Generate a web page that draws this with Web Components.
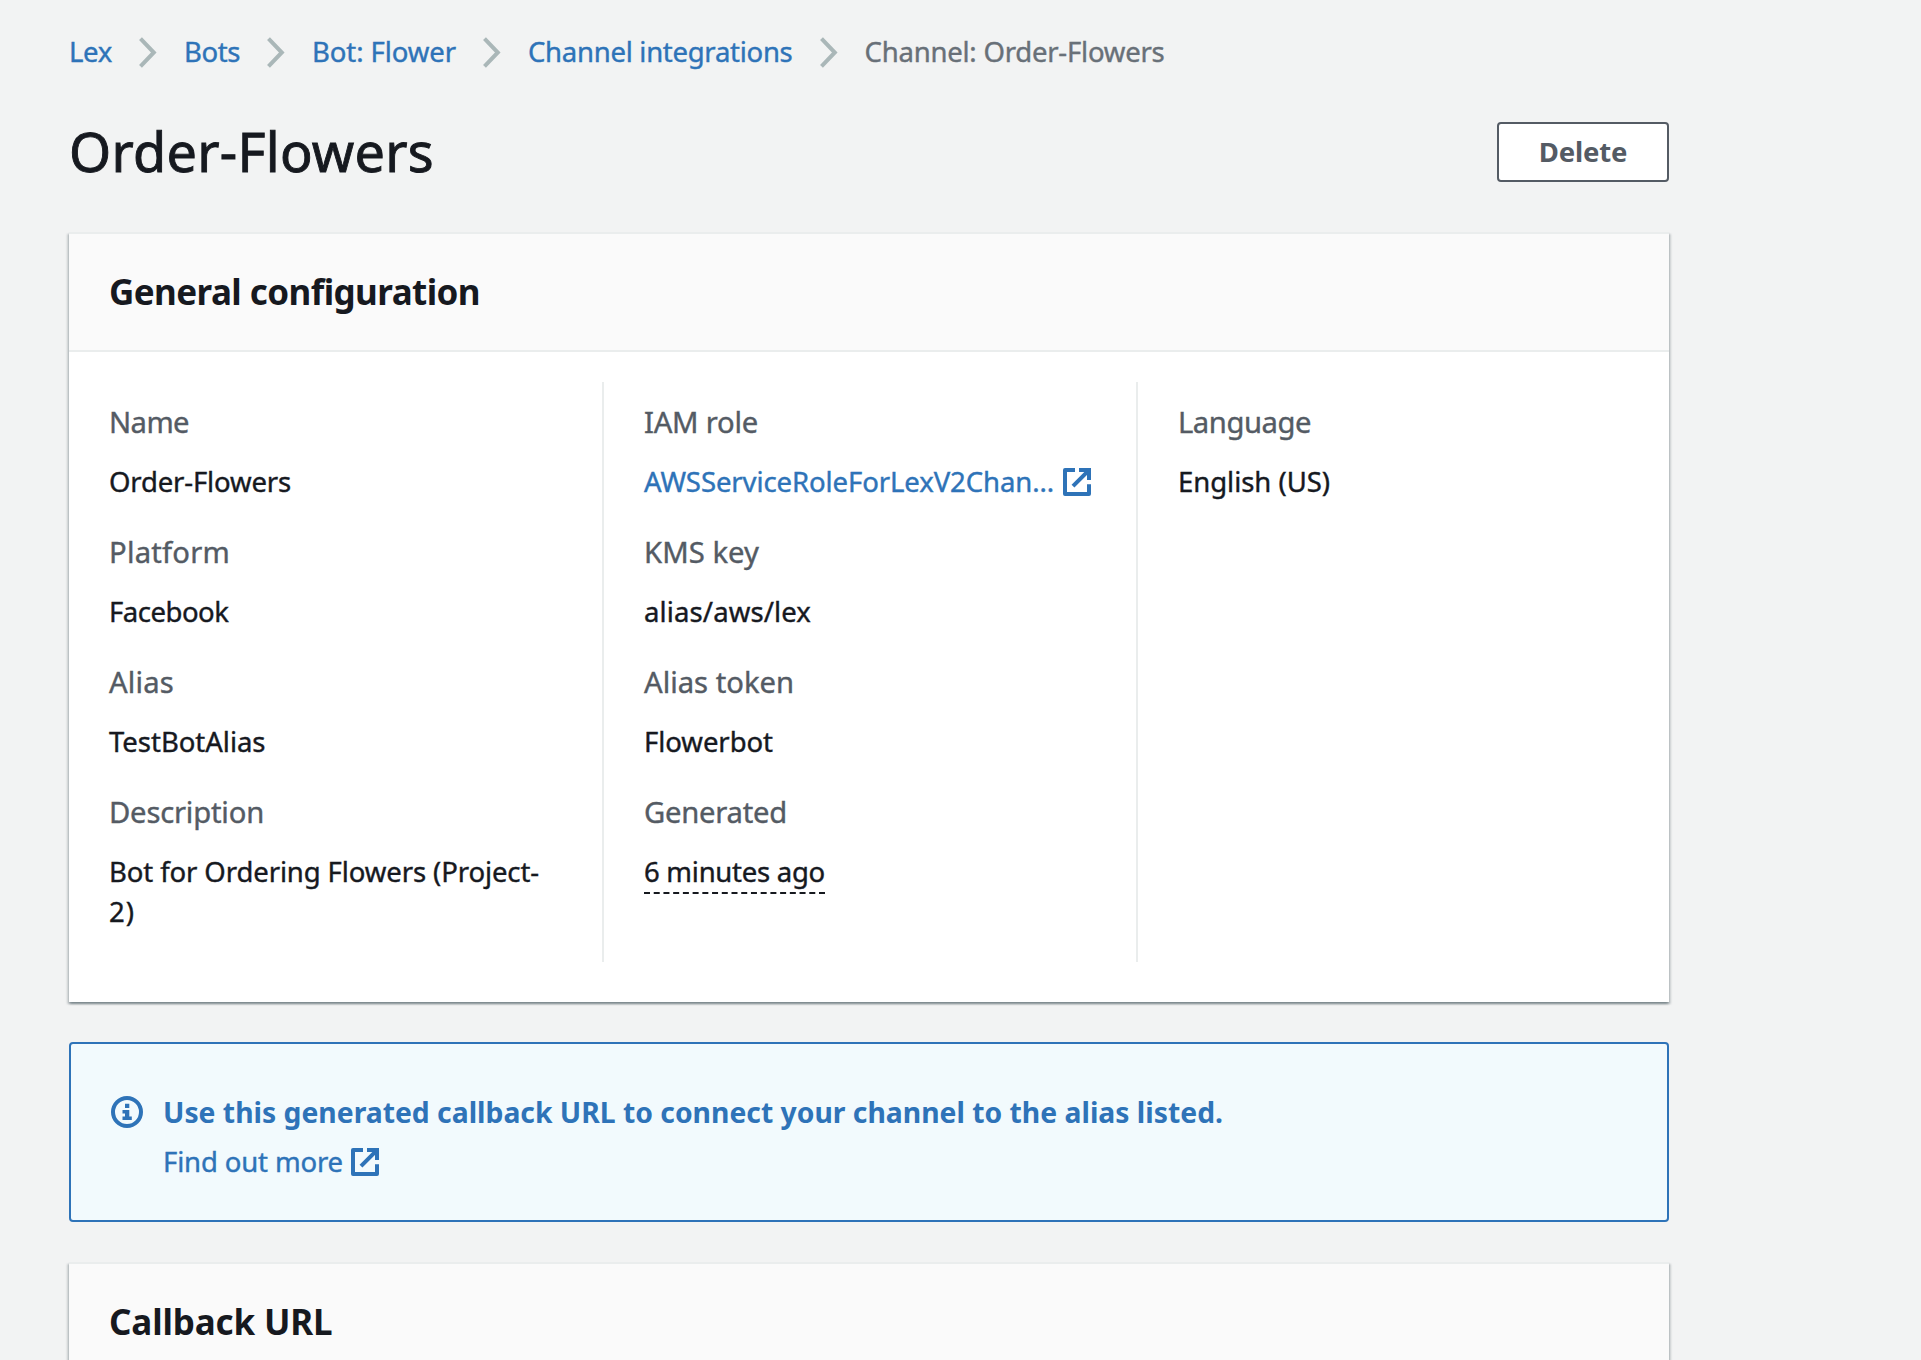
<!DOCTYPE html>
<html lang="en">
<head>
<meta charset="utf-8">
<title>Order-Flowers</title>
<style>
html,body{margin:0;height:1360px;overflow:hidden}
body{background:#f2f3f3;color:#16191f;font:400 27.5px/40px "Noto Sans","Open Sans",sans-serif;-webkit-text-stroke:.4px currentColor}
</style>
</head>
<body>
<lex-page>
  <lex-breadcrumbs slot="nav">
    <lex-crumb><fit-text w="43">Lex</fit-text></lex-crumb>
    <lex-crumb><fit-text w="56">Bots</fit-text></lex-crumb>
    <lex-crumb><fit-text w="144">Bot: Flower</fit-text></lex-crumb>
    <lex-crumb><fit-text w="264.5">Channel integrations</fit-text></lex-crumb>
    <lex-crumb current><fit-text w="300">Channel: Order-Flowers</fit-text></lex-crumb>
  </lex-breadcrumbs>
  <lex-title slot="title">
    <fit-text w="365">Order-Flowers</fit-text>
    <lex-button slot="actions"><fit-text w="88.5">Delete</fit-text></lex-button>
  </lex-title>
  <lex-card>
    <fit-text slot="heading" w="371">General configuration</fit-text>
    <lex-columns>
      <lex-column>
        <lex-field><fit-text slot="label" w="80">Name</fit-text><fit-text w="182">Order-Flowers</fit-text></lex-field>
        <lex-field><fit-text slot="label" w="121">Platform</fit-text><fit-text w="119.5">Facebook</fit-text></lex-field>
        <lex-field><fit-text slot="label" w="65">Alias</fit-text><fit-text w="156.5">TestBotAlias</fit-text></lex-field>
        <lex-field><fit-text slot="label" w="155">Description</fit-text><fit-text w="430">Bot for Ordering Flowers (Project-</fit-text><fit-text w="26">2)</fit-text></lex-field>
      </lex-column>
      <lex-column>
        <lex-field><fit-text slot="label" w="114">IAM role</fit-text><lex-link style="--gap:9px"><fit-text w="410">AWSServiceRoleForLexV2Chan...</fit-text></lex-link></lex-field>
        <lex-field><fit-text slot="label" w="115">KMS key</fit-text><fit-text w="167">alias/aws/lex</fit-text></lex-field>
        <lex-field><fit-text slot="label" w="150">Alias token</fit-text><fit-text w="129">Flowerbot</fit-text></lex-field>
        <lex-field dashed><fit-text slot="label" w="143">Generated</fit-text><fit-text w="181">6 minutes ago</fit-text></lex-field>
      </lex-column>
      <lex-column>
        <lex-field><fit-text slot="label" w="133">Language</fit-text><fit-text w="152">English (US)</fit-text></lex-field>
      </lex-column>
    </lex-columns>
  </lex-card>
  <lex-alert>
    <fit-text slot="heading" w="1060">Use this generated callback URL to connect your channel to the alias listed.</fit-text>
    <lex-link><fit-text w="180">Find out more</fit-text></lex-link>
  </lex-alert>
  <lex-card>
    <fit-text slot="heading" w="223.5">Callback URL</fit-text>
  </lex-card>
</lex-page>
<script>
function define(name, html, setup) {
  customElements.define(name, class extends HTMLElement {
    connectedCallback() {
      if (this.shadowRoot) return;
      const t = document.createElement('template');
      t.innerHTML = html;
      this.attachShadow({mode: 'open'}).append(t.content.cloneNode(true));
      if (setup) setup(this);
    }
  });
}

define('lex-page', `<style>
:host{display:flex;flex-direction:column;width:1600px;padding:32px 0 0 69px}
main{display:flex;flex-direction:column;gap:40px;margin-top:50px}
::slotted([slot=title]){margin-top:50px}
</style><slot name="nav"></slot><slot name="title"></slot><main><slot></slot></main>`);

define('lex-breadcrumbs', `<style>:host{display:flex;align-items:center;height:40px}</style><slot></slot>`);

define('lex-crumb', `<style>
:host{display:flex;align-items:center;color:#2e73b8}
:host([current]){color:#687078}
svg{width:18px;height:31px;margin:0 27px}
:host([current]) svg{display:none}
</style><slot></slot><svg viewBox="0 0 18 31" fill="none" stroke="#aab7b8" stroke-width="4"><path d="M1.5 1.7 14.8 15.5 1.5 29.3"/></svg>`);

define('lex-title', `<style>
:host{display:flex;justify-content:space-between;align-items:flex-start;height:60px}
h1{margin:0;font-size:54px;font-weight:400;line-height:58px;-webkit-text-stroke:.9px currentColor}
</style><h1><slot></slot></h1><slot name="actions"></slot>`);

define('lex-button', `<style>
:host{display:block;-webkit-text-stroke:0}
button{display:flex;justify-content:center;align-items:center;box-sizing:border-box;width:172px;height:60px;padding:0 0 1px;border:2px solid #545b64;border-radius:4px;background:#fff;color:#545b64;font:700 27.5px/40px "Noto Sans","Open Sans",sans-serif}
</style><button><slot></slot></button>`);

define('lex-card', `<style>
:host{display:block;background:#fff;border-top:2px solid #eaeded;box-shadow:0 2px 2px 0 rgba(0,28,36,.3),2px 2px 2px 0 rgba(0,28,36,.15),-2px 2px 2px 0 rgba(0,28,36,.15)}
header{background:#fafafa;border-bottom:2px solid #eaeded;padding:0 40px}
h2{margin:0;font-size:35px;font-weight:700;line-height:116px;-webkit-text-stroke:0}
</style><header><h2><slot name="heading"></slot></h2></header><slot></slot>`);

define('lex-columns', `<style>:host{display:grid;grid-template-columns:533px 534px 533px;height:580px;padding:30px 0 40px}</style><slot></slot>`);

define('lex-column', `<style>
:host{display:flex;flex-direction:column;gap:30px;box-sizing:border-box;padding:20px 40px 0 40px}
:host(:not(:first-child)){border-left:2px solid #eaeded}
</style><slot></slot>`);

define('lex-field', `<style>
:host{display:block}
.label{font-size:29.2px;color:#545b64;margin-bottom:20px}
.value{display:flex;flex-direction:column;align-items:flex-start}
:host([dashed]) .value{width:181px;border-bottom:2px dashed #16191f}
</style><div class="label"><slot name="label"></slot></div><div class="value"><slot></slot></div>`);

define('lex-link', `<style>
:host{display:flex;align-items:center;gap:var(--gap,8px);color:#2e73b8}
svg{width:28px;height:28px}
</style><slot></slot><svg viewBox="0 0 28 28" fill="none" stroke="currentColor" stroke-width="4"><path stroke-linejoin="round" d="M12 2H2V26H26V16.3"/><path d="M16 2H26V12"/><path d="M10 18.2 25 3.2"/></svg>`);

define('lex-alert', `<style>
:host{display:flex;box-sizing:border-box;height:180px;padding:48px 40px 0;border:2px solid #2e73b8;border-radius:4px;background:#f2fafd;color:#2e73b8}
svg{width:32px;height:32px;margin:4px 20px 0 0}
.content{display:flex;flex-direction:column;gap:10px}
.heading{font-size:28.3px;font-weight:700;-webkit-text-stroke:0}
</style><svg viewBox="0 0 32 32"><circle cx="16" cy="16" r="14" fill="none" stroke="currentColor" stroke-width="4"/><path fill="currentColor" d="M14 7.7h4.3V12H14zM11.5 14h6.8v6.5h2.5V24h-9.3v-3.5H14v-3h-2.5z"/></svg>
<div class="content"><div class="heading"><slot name="heading"></slot></div><slot></slot></div>`);

/* Single-line text whose letter spacing is adjusted so that it spans w pixels. */
define('fit-text', `<style>:host{display:block;white-space:nowrap}</style><span><slot></slot></span>`, el => {
  const span = el.shadowRoot.querySelector('span');
  const natural = span.getBoundingClientRect().width;
  const w = +el.getAttribute('w');
  span.style.letterSpacing = ((w - natural) / el.textContent.length).toFixed(3) + 'px';
  el.style.width = w + 'px';
});
</script>
</body>
</html>
